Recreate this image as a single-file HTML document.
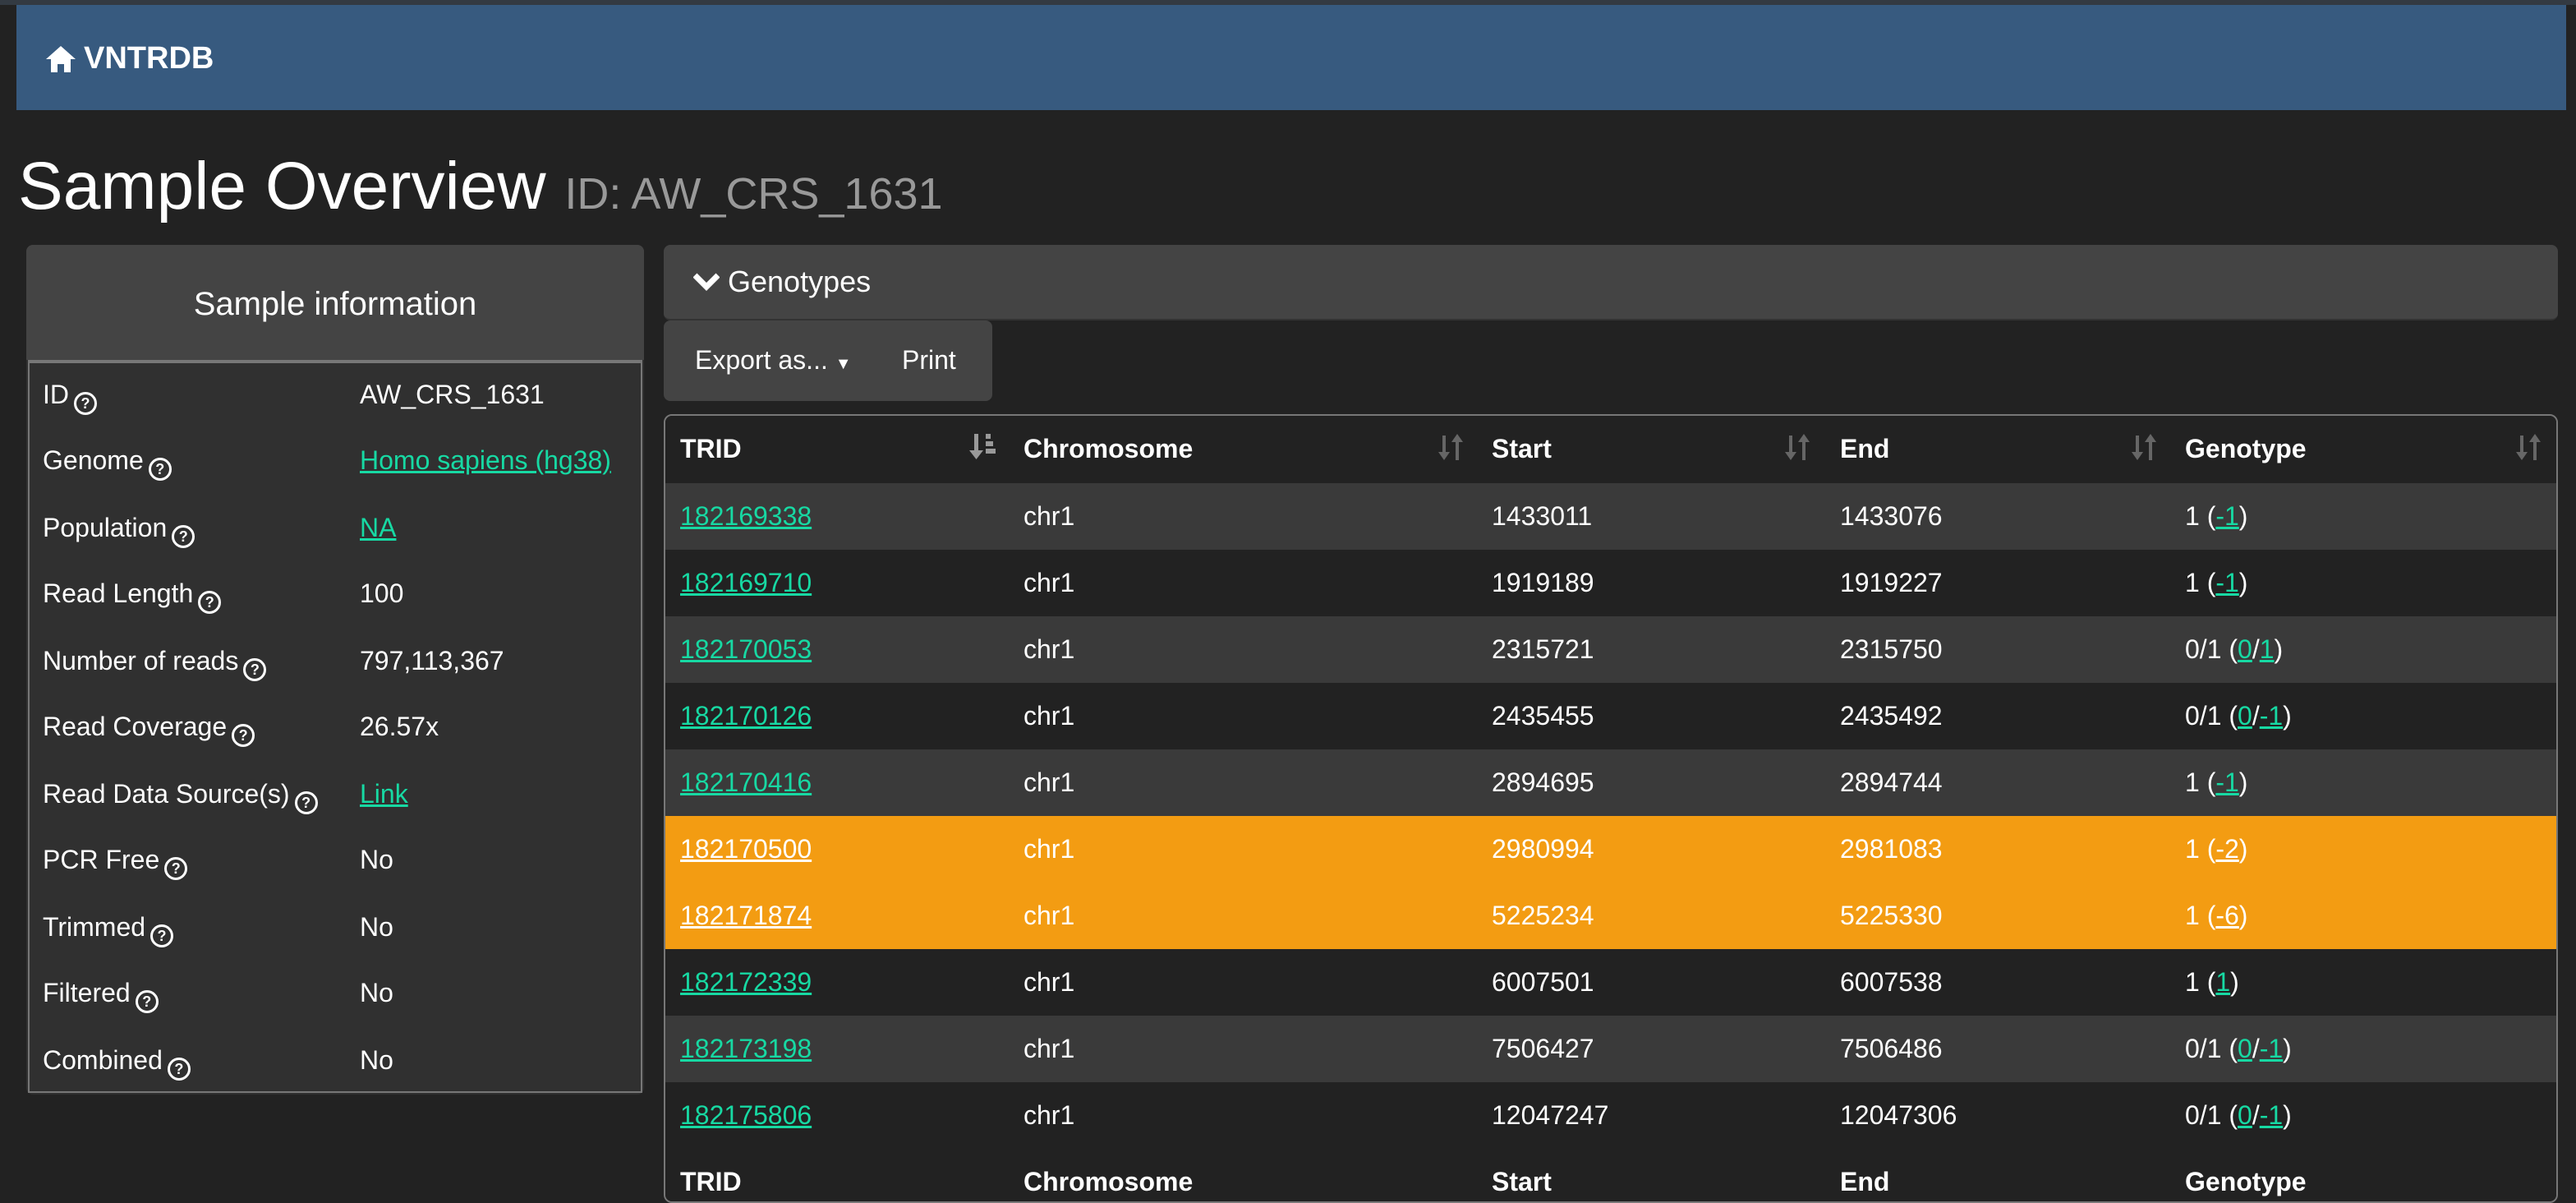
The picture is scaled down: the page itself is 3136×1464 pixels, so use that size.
<!DOCTYPE html>
<html><head><meta charset="utf-8"><style>
html{zoom:2}
body{margin:0;width:1568px;height:718px;overflow:hidden;background:#222;font-family:"Liberation Sans",sans-serif;color:#fff;font-size:15px;position:relative}
.top{position:absolute;left:0;top:0;width:1568px;height:3px;background:#333a42}
.nav{position:absolute;left:10px;top:3px;width:1552px;height:64px;background:#375a7f}
.nav span{position:absolute;left:17px;top:22px;font-weight:bold;font-size:19px;display:flex;align-items:center;gap:4px}
h1{position:absolute;left:11px;top:90px;margin:0;font-weight:normal;font-size:41px;white-space:nowrap}
h1 small{font-size:27px;color:#999}
.lp{position:absolute;left:16px;top:149px;width:376px;height:517px;background:#303030;border-radius:4px}
.lp .hd{height:70px;background:#444;border-radius:4px 4px 0 0;text-align:center;line-height:72px;font-size:20px}
.lp .bd{position:absolute;left:1px;top:70px;width:374px;height:446px;border:1px solid #777;border-top:2px solid #777;box-sizing:border-box}
.row{position:absolute;left:10px;height:40px;line-height:40px;font-size:16px;width:360px}
.row .v{position:absolute;left:193px;top:0}
.i{display:inline-block;width:11px;height:11px;border:1.5px solid #fff;border-radius:50%;font-size:9px;line-height:11px;text-align:center;vertical-align:-3px;margin-left:3px;font-weight:bold}
a{color:#17d9a3;text-decoration:underline}
.gb{position:absolute;left:404px;top:149px;width:1153px;height:45px;background:#444;border-radius:4px;border-bottom:1px solid #333}
.gb span{position:absolute;left:18px;top:12px;font-size:18px}
.btns{position:absolute;left:404px;top:195px;width:200px;height:49px;background:#444;border-radius:4px}
.btns span{position:absolute;top:15px;font-size:16px}
.tbl{position:absolute;left:404px;top:252px;width:1153px;height:480px;border:1px solid #777;border-radius:5px;overflow:hidden;box-sizing:border-box}
.tr{position:absolute;left:0;width:1153px;height:40.5px;line-height:40px;font-size:16px}
.tr div{position:absolute;top:0}
.h{font-weight:bold}
.tr div.s{top:10px;line-height:0}
</style></head><body>
<div class="top"></div>
<div class="nav"><span><svg width="20" height="18" viewBox="0 0 20 18"><path d="M10 1 L19 9 H16 V17 H12 V12 H8 V17 H4 V9 H1 Z" fill="#fff"/></svg>VNTRDB</span></div>
<h1>Sample Overview <small>ID: AW_CRS_1631</small></h1>
<div class="lp"><div class="hd">Sample information</div><div class="bd"></div>
<div class="row" style="top:71px">ID<span class="i">?</span><span class="v">AW_CRS_1631</span></div>
<div class="row" style="top:111px">Genome<span class="i">?</span><span class="v"><a>Homo sapiens (hg38)</a></span></div>
<div class="row" style="top:152px">Population<span class="i">?</span><span class="v"><a>NA</a></span></div>
<div class="row" style="top:192px">Read Length<span class="i">?</span><span class="v">100</span></div>
<div class="row" style="top:233px">Number of reads<span class="i">?</span><span class="v">797,113,367</span></div>
<div class="row" style="top:273px">Read Coverage<span class="i">?</span><span class="v">26.57x</span></div>
<div class="row" style="top:314px">Read Data Source(s)<span class="i">?</span><span class="v"><a>Link</a></span></div>
<div class="row" style="top:354px">PCR Free<span class="i">?</span><span class="v">No</span></div>
<div class="row" style="top:395px">Trimmed<span class="i">?</span><span class="v">No</span></div>
<div class="row" style="top:435px">Filtered<span class="i">?</span><span class="v">No</span></div>
<div class="row" style="top:476px">Combined<span class="i">?</span><span class="v">No</span></div>
</div>
<div class="gb"><span><svg width="16" height="12" viewBox="0 0 16 12" style="vertical-align:0"><path d="M1 2 L8 9 L15 2" stroke="#fff" stroke-width="3.5" fill="none"/></svg> Genotypes</span></div>
<div class="btns"><span style="left:19px">Export as... <span style="position:static;font-size:10px">▼</span></span><span style="left:145px">Print</span></div>
<div class="tbl">
<div class="tr h" style="top:0;background:#222">
<div style="left:9px">TRID</div>
<div class="s" style="left:185px"><svg width="18" height="18" viewBox="0 0 18 18" fill="#999"><rect x="3" y="1" width="2.5" height="11"/><path d="M0 11 H8.5 L4.25 16.5Z"/><rect x="10" y="1" width="3" height="3"/><rect x="10" y="5.5" width="4.5" height="3"/><rect x="10" y="10" width="6" height="3"/></svg></div>
<div style="left:218px">Chromosome</div>
<div style="left:503px">Start</div>
<div style="left:715px">End</div>
<div style="left:925px">Genotype</div>
</div>
<div class="tr" style="top:41px;background:#3a3a3a"><div style="left:9px"><a>182169338</a></div><div style="left:218px">chr1</div><div style="left:503px">1433011</div><div style="left:715px">1433076</div><div style="left:925px">1 (<a>-1</a>)</div></div>
<div class="tr" style="top:81.5px;background:#222"><div style="left:9px"><a>182169710</a></div><div style="left:218px">chr1</div><div style="left:503px">1919189</div><div style="left:715px">1919227</div><div style="left:925px">1 (<a>-1</a>)</div></div>
<div class="tr" style="top:122px;background:#3a3a3a"><div style="left:9px"><a>182170053</a></div><div style="left:218px">chr1</div><div style="left:503px">2315721</div><div style="left:715px">2315750</div><div style="left:925px">0/1 (<a>0</a>/<a>1</a>)</div></div>
<div class="tr" style="top:162.5px;background:#222"><div style="left:9px"><a>182170126</a></div><div style="left:218px">chr1</div><div style="left:503px">2435455</div><div style="left:715px">2435492</div><div style="left:925px">0/1 (<a>0</a>/<a>-1</a>)</div></div>
<div class="tr" style="top:203px;background:#3a3a3a"><div style="left:9px"><a>182170416</a></div><div style="left:218px">chr1</div><div style="left:503px">2894695</div><div style="left:715px">2894744</div><div style="left:925px">1 (<a>-1</a>)</div></div>
<div class="tr" style="top:243.5px;background:#f39c12"><div style="left:9px"><a style="color:#fff">182170500</a></div><div style="left:218px">chr1</div><div style="left:503px">2980994</div><div style="left:715px">2981083</div><div style="left:925px">1 (<a style="color:#fff">-2</a>)</div></div>
<div class="tr" style="top:284px;background:#f39c12"><div style="left:9px"><a style="color:#fff">182171874</a></div><div style="left:218px">chr1</div><div style="left:503px">5225234</div><div style="left:715px">5225330</div><div style="left:925px">1 (<a style="color:#fff">-6</a>)</div></div>
<div class="tr" style="top:324.5px;background:#222"><div style="left:9px"><a>182172339</a></div><div style="left:218px">chr1</div><div style="left:503px">6007501</div><div style="left:715px">6007538</div><div style="left:925px">1 (<a>1</a>)</div></div>
<div class="tr" style="top:365px;background:#3a3a3a"><div style="left:9px"><a>182173198</a></div><div style="left:218px">chr1</div><div style="left:503px">7506427</div><div style="left:715px">7506486</div><div style="left:925px">0/1 (<a>0</a>/<a>-1</a>)</div></div>
<div class="tr" style="top:405.5px;background:#222"><div style="left:9px"><a>182175806</a></div><div style="left:218px">chr1</div><div style="left:503px">12047247</div><div style="left:715px">12047306</div><div style="left:925px">0/1 (<a>0</a>/<a>-1</a>)</div></div>
<div class="tr h" style="top:446px;background:#222"><div style="left:9px">TRID</div><div style="left:218px">Chromosome</div><div style="left:503px">Start</div><div style="left:715px">End</div><div style="left:925px">Genotype</div></div>
</div>
<svg style="position:absolute;left:0;top:0" width="1568" height="718">
<defs><g id="ud" fill="#666"><rect x="3" y="1" width="2" height="12"/><path d="M0.5 11 H7.5 L4 16Z"/><rect x="11" y="3" width="2" height="13"/><path d="M8.5 5 H15.5 L12 0Z"/></g></defs>
<use href="#ud" x="875" y="264"/><use href="#ud" x="1086" y="264"/><use href="#ud" x="1297" y="264"/><use href="#ud" x="1531" y="264"/>
</svg>
</body></html>
